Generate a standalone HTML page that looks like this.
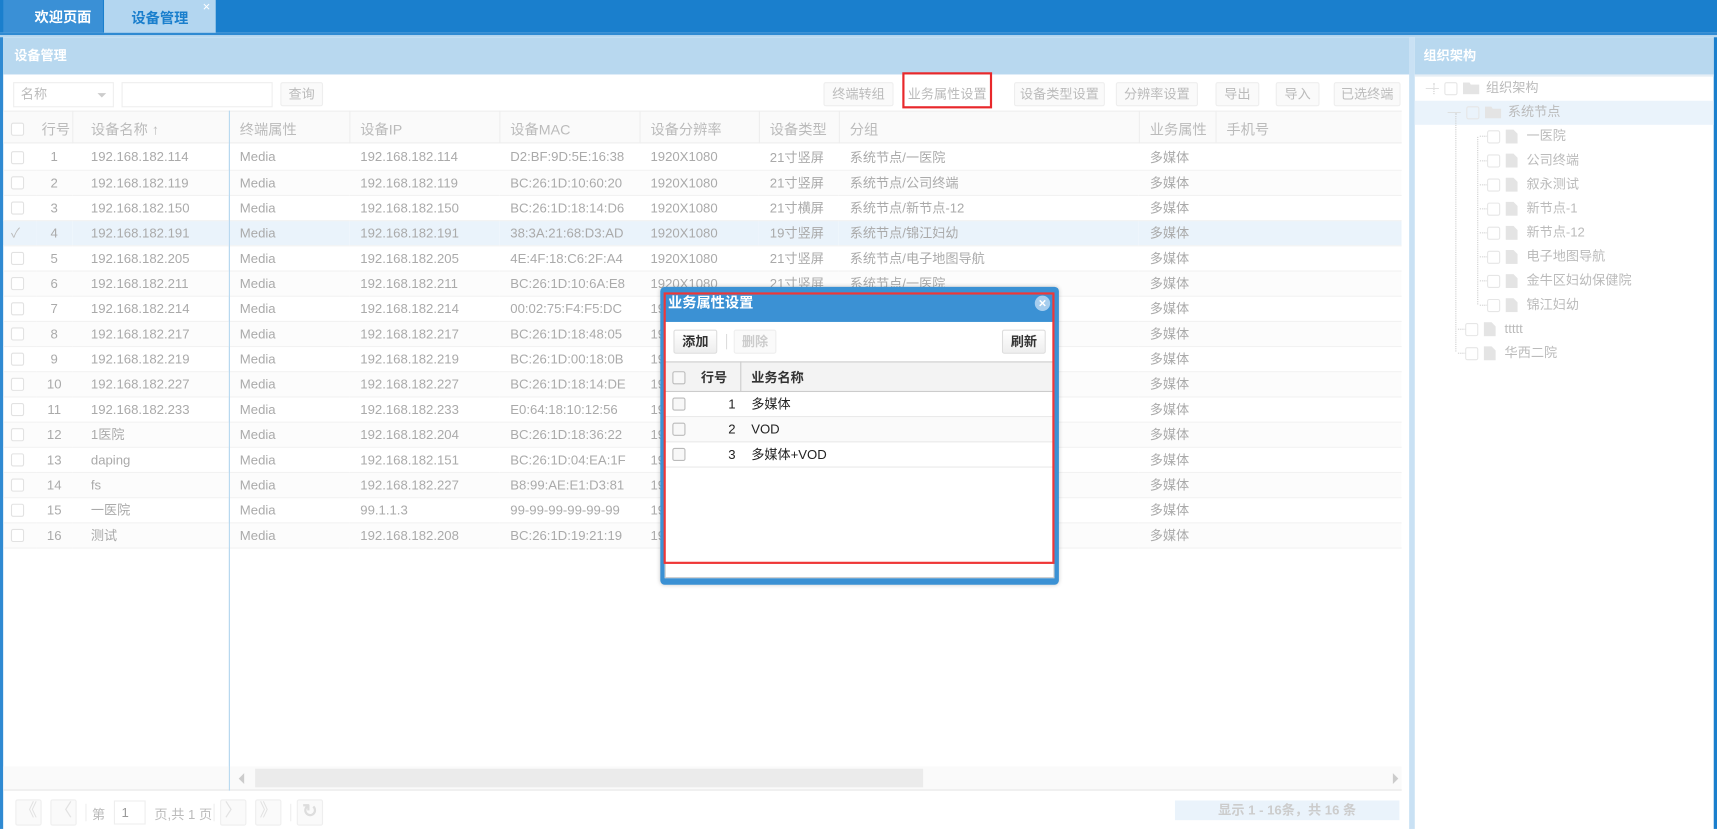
<!DOCTYPE html>
<html><head><meta charset="utf-8">
<style>
*{box-sizing:border-box;margin:0;padding:0}
html,body{width:1717px;height:829px;overflow:hidden;background:#fff}
#w{position:absolute;left:0;top:0;width:1568px;height:757px;transform:scale(1.09503);transform-origin:0 0;font-family:"Liberation Sans","Noto Sans CJK SC",sans-serif;font-size:12px;color:#aaa}
.a{position:absolute}
.h{color:#bbb}
.btn{position:absolute;height:22px;border:1px solid #eee;border-radius:2px;background:#fafafa;color:#bbb;text-align:center;line-height:20px;font-size:12px}
table{border-collapse:collapse;table-layout:fixed}
td{height:23px;white-space:nowrap;overflow:hidden;border-bottom:1px solid #f2f2f2;color:#aaa}
tr:nth-child(even) td{background:#fcfcfc}
tr.sel td{background:#eaf3fb}
.cb{display:inline-block;width:12px;height:12px;border:1px solid #e2e2e2;border-radius:2px;background:#fff;vertical-align:middle}
.tr{position:absolute;height:22px;line-height:22px;color:#bbb;font-size:12px}
.tcb{display:inline-block;width:12px;height:12px;border:1px solid #e6e6e6;border-radius:2px;vertical-align:middle;margin-right:5px}
.fi{display:inline-block;width:11px;height:13px;background:#e4e4e4;vertical-align:middle;margin-right:8px;clip-path:polygon(0 0,65% 0,100% 30%,100% 100%,0 100%)}
.fo{display:inline-block;width:15px;height:11px;background:#e4e4e4;vertical-align:middle;margin-right:6px;clip-path:polygon(0 0,40% 0,48% 18%,100% 18%,100% 100%,0 100%)}
.dcb{display:inline-block;width:12px;height:12px;border:1px solid #bbb;border-radius:2px;background:#f8f8f8;vertical-align:middle}
</style></head><body><div id="w">
<div class="a" style="left:0;top:0;width:1568px;height:30px;background:#1a7fcd"></div>
<div class="a" style="left:3px;top:0;width:91px;height:30px;background:#3a90d6;color:#fff;font-weight:bold;font-size:13px;text-align:center;line-height:32px;padding-left:18px">欢迎页面</div>
<div class="a" style="left:95px;top:0;width:102px;height:30px;background:#b3d6f0;color:#1a7fcd;font-weight:bold;font-size:13px;text-align:center;line-height:34px">设备管理</div>
<div class="a" style="left:185px;top:-1px;color:#fff;font-size:12px">×</div>
<div class="a" style="left:0;top:30px;width:1568px;height:4px;background:#b8d8ef;border-top:2px solid #2f8ad2"></div>
<div class="a" style="left:0;top:34px;width:3px;height:723px;background:#2f8ad2"></div>
<div class="a" style="left:1565px;top:34px;width:3px;height:723px;background:#1a7fcd"></div>
<div class="a" style="left:3px;top:34px;width:1285px;height:723px;background:#fff;border-right:1px solid #b8d8ef"></div>
<div class="a" style="left:3px;top:34px;width:1284px;height:34px;background:#b8d8ef;color:#fff;font-weight:bold;font-size:12px;line-height:34px;padding-left:10px">设备管理</div>
<div class="a" style="left:1287px;top:34px;width:5px;height:723px;background:#c9e1f4"></div>
<div class="a" style="left:12px;top:75px;width:92px;height:23px;border:1px solid #eee;color:#bbb;line-height:21px;padding-left:6px">名称<span class="a" style="right:6px;top:9px;border:4px solid transparent;border-top:4px solid #ccc"></span></div>
<div class="a" style="left:111px;top:75px;width:138px;height:23px;border:1px solid #eee"></div>
<div class="btn" style="left:256px;top:75px;width:39px">查询</div>
<div class="btn" style="left:752px;top:75px;width:64px">终端转组</div>
<div class="btn" style="left:826px;top:75px;width:78px;border-color:transparent;background:none">业务属性设置</div>
<div class="a" style="left:824px;top:66px;width:82px;height:33px;border:2px solid #e8282b"></div>
<div class="btn" style="left:926px;top:75px;width:83px">设备类型设置</div>
<div class="btn" style="left:1019px;top:75px;width:75px">分辨率设置</div>
<div class="btn" style="left:1110px;top:75px;width:40px">导出</div>
<div class="btn" style="left:1165px;top:75px;width:40px">导入</div>
<div class="btn" style="left:1218px;top:75px;width:61px">已选终端</div>
<div class="a" style="left:3px;top:101px;width:1277px;height:30px;background:#fafafa;border-top:1px solid #eee;border-bottom:1px solid #eee"></div>
<div class="a" style="left:10px;top:110px"><span class="cb"></span></div>
<div class="a h" style="left:38px;top:108px;font-size:13px">行号</div>
<div class="a" style="left:66px;top:101px;width:1px;height:30px;background:#eee"></div>
<div class="a h" style="left:83px;top:108px;font-size:13px">设备名称 ↑</div>
<div class="a" style="left:209px;top:101px;width:1px;height:620px;background:#b8d8ef"></div>
<div class="a h" style="left:219px;top:108px;font-size:13px">终端属性</div>
<div class="a" style="left:319px;top:101px;width:1px;height:30px;background:#eee"></div>
<div class="a h" style="left:329px;top:108px;font-size:13px">设备IP</div>
<div class="a" style="left:456px;top:101px;width:1px;height:30px;background:#eee"></div>
<div class="a h" style="left:466px;top:108px;font-size:13px">设备MAC</div>
<div class="a" style="left:584px;top:101px;width:1px;height:30px;background:#eee"></div>
<div class="a h" style="left:594px;top:108px;font-size:13px">设备分辨率</div>
<div class="a" style="left:693px;top:101px;width:1px;height:30px;background:#eee"></div>
<div class="a h" style="left:703px;top:108px;font-size:13px">设备类型</div>
<div class="a" style="left:766px;top:101px;width:1px;height:30px;background:#eee"></div>
<div class="a h" style="left:776px;top:108px;font-size:13px">分组</div>
<div class="a" style="left:1040px;top:101px;width:1px;height:30px;background:#eee"></div>
<div class="a h" style="left:1050px;top:108px;font-size:13px">业务属性</div>
<div class="a" style="left:1110px;top:101px;width:1px;height:30px;background:#eee"></div>
<div class="a h" style="left:1120px;top:108px;font-size:13px">手机号</div>
<table class="a" style="left:3px;top:132px;width:1277px">
<colgroup><col style="width:30px"><col style="width:33px"><col style="width:143px"><col style="width:110px"><col style="width:137px"><col style="width:128px"><col style="width:109px"><col style="width:73px"><col style="width:274px"><col style="width:70px"><col style="width:170px"></colgroup>
<tr><td style="padding-left:7px"><span class="cb"></span></td><td style="text-align:center">1</td><td style="padding-left:17px">192.168.182.114</td><td style="padding-left:10px">Media</td><td style="padding-left:10px">192.168.182.114</td><td style="padding-left:10px">D2:BF:9D:5E:16:38</td><td style="padding-left:10px">1920X1080</td><td style="padding-left:10px">21寸竖屏</td><td style="padding-left:10px">系统节点/一医院</td><td style="padding-left:10px">多媒体</td><td></td></tr>
<tr><td style="padding-left:7px"><span class="cb"></span></td><td style="text-align:center">2</td><td style="padding-left:17px">192.168.182.119</td><td style="padding-left:10px">Media</td><td style="padding-left:10px">192.168.182.119</td><td style="padding-left:10px">BC:26:1D:10:60:20</td><td style="padding-left:10px">1920X1080</td><td style="padding-left:10px">21寸竖屏</td><td style="padding-left:10px">系统节点/公司终端</td><td style="padding-left:10px">多媒体</td><td></td></tr>
<tr><td style="padding-left:7px"><span class="cb"></span></td><td style="text-align:center">3</td><td style="padding-left:17px">192.168.182.150</td><td style="padding-left:10px">Media</td><td style="padding-left:10px">192.168.182.150</td><td style="padding-left:10px">BC:26:1D:18:14:D6</td><td style="padding-left:10px">1920X1080</td><td style="padding-left:10px">21寸横屏</td><td style="padding-left:10px">系统节点/新节点-12</td><td style="padding-left:10px">多媒体</td><td></td></tr>
<tr class="sel"><td style="padding-left:7px;color:#bbb">✓</td><td style="text-align:center">4</td><td style="padding-left:17px">192.168.182.191</td><td style="padding-left:10px">Media</td><td style="padding-left:10px">192.168.182.191</td><td style="padding-left:10px">38:3A:21:68:D3:AD</td><td style="padding-left:10px">1920X1080</td><td style="padding-left:10px">19寸竖屏</td><td style="padding-left:10px">系统节点/锦江妇幼</td><td style="padding-left:10px">多媒体</td><td></td></tr>
<tr><td style="padding-left:7px"><span class="cb"></span></td><td style="text-align:center">5</td><td style="padding-left:17px">192.168.182.205</td><td style="padding-left:10px">Media</td><td style="padding-left:10px">192.168.182.205</td><td style="padding-left:10px">4E:4F:18:C6:2F:A4</td><td style="padding-left:10px">1920X1080</td><td style="padding-left:10px">21寸竖屏</td><td style="padding-left:10px">系统节点/电子地图导航</td><td style="padding-left:10px">多媒体</td><td></td></tr>
<tr><td style="padding-left:7px"><span class="cb"></span></td><td style="text-align:center">6</td><td style="padding-left:17px">192.168.182.211</td><td style="padding-left:10px">Media</td><td style="padding-left:10px">192.168.182.211</td><td style="padding-left:10px">BC:26:1D:10:6A:E8</td><td style="padding-left:10px">1920X1080</td><td style="padding-left:10px">21寸竖屏</td><td style="padding-left:10px">系统节点/一医院</td><td style="padding-left:10px">多媒体</td><td></td></tr>
<tr><td style="padding-left:7px"><span class="cb"></span></td><td style="text-align:center">7</td><td style="padding-left:17px">192.168.182.214</td><td style="padding-left:10px">Media</td><td style="padding-left:10px">192.168.182.214</td><td style="padding-left:10px">00:02:75:F4:F5:DC</td><td style="padding-left:10px">1920X1080</td><td style="padding-left:10px">21寸竖屏</td><td style="padding-left:10px">系统节点</td><td style="padding-left:10px">多媒体</td><td></td></tr>
<tr><td style="padding-left:7px"><span class="cb"></span></td><td style="text-align:center">8</td><td style="padding-left:17px">192.168.182.217</td><td style="padding-left:10px">Media</td><td style="padding-left:10px">192.168.182.217</td><td style="padding-left:10px">BC:26:1D:18:48:05</td><td style="padding-left:10px">1920X1080</td><td style="padding-left:10px">21寸竖屏</td><td style="padding-left:10px">系统节点</td><td style="padding-left:10px">多媒体</td><td></td></tr>
<tr><td style="padding-left:7px"><span class="cb"></span></td><td style="text-align:center">9</td><td style="padding-left:17px">192.168.182.219</td><td style="padding-left:10px">Media</td><td style="padding-left:10px">192.168.182.219</td><td style="padding-left:10px">BC:26:1D:00:18:0B</td><td style="padding-left:10px">1920X1080</td><td style="padding-left:10px">21寸竖屏</td><td style="padding-left:10px">系统节点</td><td style="padding-left:10px">多媒体</td><td></td></tr>
<tr><td style="padding-left:7px"><span class="cb"></span></td><td style="text-align:center">10</td><td style="padding-left:17px">192.168.182.227</td><td style="padding-left:10px">Media</td><td style="padding-left:10px">192.168.182.227</td><td style="padding-left:10px">BC:26:1D:18:14:DE</td><td style="padding-left:10px">1920X1080</td><td style="padding-left:10px">21寸竖屏</td><td style="padding-left:10px">系统节点</td><td style="padding-left:10px">多媒体</td><td></td></tr>
<tr><td style="padding-left:7px"><span class="cb"></span></td><td style="text-align:center">11</td><td style="padding-left:17px">192.168.182.233</td><td style="padding-left:10px">Media</td><td style="padding-left:10px">192.168.182.233</td><td style="padding-left:10px">E0:64:18:10:12:56</td><td style="padding-left:10px">1920X1080</td><td style="padding-left:10px">21寸竖屏</td><td style="padding-left:10px">系统节点</td><td style="padding-left:10px">多媒体</td><td></td></tr>
<tr><td style="padding-left:7px"><span class="cb"></span></td><td style="text-align:center">12</td><td style="padding-left:17px">1医院</td><td style="padding-left:10px">Media</td><td style="padding-left:10px">192.168.182.204</td><td style="padding-left:10px">BC:26:1D:18:36:22</td><td style="padding-left:10px">1920X1080</td><td style="padding-left:10px">21寸竖屏</td><td style="padding-left:10px">系统节点</td><td style="padding-left:10px">多媒体</td><td></td></tr>
<tr><td style="padding-left:7px"><span class="cb"></span></td><td style="text-align:center">13</td><td style="padding-left:17px">daping</td><td style="padding-left:10px">Media</td><td style="padding-left:10px">192.168.182.151</td><td style="padding-left:10px">BC:26:1D:04:EA:1F</td><td style="padding-left:10px">1920X1080</td><td style="padding-left:10px">21寸竖屏</td><td style="padding-left:10px">系统节点</td><td style="padding-left:10px">多媒体</td><td></td></tr>
<tr><td style="padding-left:7px"><span class="cb"></span></td><td style="text-align:center">14</td><td style="padding-left:17px">fs</td><td style="padding-left:10px">Media</td><td style="padding-left:10px">192.168.182.227</td><td style="padding-left:10px">B8:99:AE:E1:D3:81</td><td style="padding-left:10px">1920X1080</td><td style="padding-left:10px">21寸竖屏</td><td style="padding-left:10px">系统节点</td><td style="padding-left:10px">多媒体</td><td></td></tr>
<tr><td style="padding-left:7px"><span class="cb"></span></td><td style="text-align:center">15</td><td style="padding-left:17px">一医院</td><td style="padding-left:10px">Media</td><td style="padding-left:10px">99.1.1.3</td><td style="padding-left:10px">99-99-99-99-99-99</td><td style="padding-left:10px">1920X1080</td><td style="padding-left:10px">21寸竖屏</td><td style="padding-left:10px">系统节点</td><td style="padding-left:10px">多媒体</td><td></td></tr>
<tr><td style="padding-left:7px"><span class="cb"></span></td><td style="text-align:center">16</td><td style="padding-left:17px">测试</td><td style="padding-left:10px">Media</td><td style="padding-left:10px">192.168.182.208</td><td style="padding-left:10px">BC:26:1D:19:21:19</td><td style="padding-left:10px">1920X1080</td><td style="padding-left:10px">21寸竖屏</td><td style="padding-left:10px">系统节点</td><td style="padding-left:10px">多媒体</td><td></td></tr>
</table>
<div class="a" style="left:209px;top:132px;width:1px;height:589px;background:#b8d8ef"></div>
<div class="a" style="left:3px;top:700px;width:1277px;height:22px;background:#fafafa;border-bottom:1px solid #e6e6e6"></div>
<div class="a" style="left:209px;top:700px;width:1px;height:22px;background:#b8d8ef"></div>
<div class="a" style="left:218px;top:706px;border:5px solid transparent;border-right:5px solid #ccc;border-left:0"></div>
<div class="a" style="left:233px;top:702px;width:610px;height:17px;background:#ebebeb"></div>
<div class="a" style="left:1272px;top:706px;border:5px solid transparent;border-left:5px solid #ccc;border-right:0"></div>
<div class="btn" style="left:14px;top:730px;width:24px;height:24px;font-size:16px;color:#e2e2e2">《</div>
<div class="btn" style="left:46px;top:730px;width:24px;height:24px;font-size:16px;color:#e2e2e2">〈</div>
<div class="a" style="left:78px;top:734px;width:1px;height:16px;background:#eee"></div>
<div class="a" style="left:84px;top:735px;color:#bbb">第</div>
<div class="a" style="left:104px;top:731px;width:29px;height:22px;border:1px solid #eee;color:#999;line-height:20px;padding-left:6px">1</div>
<div class="a" style="left:141px;top:735px;color:#bbb">页,共 1 页</div>
<div class="a" style="left:195px;top:734px;width:1px;height:16px;background:#eee"></div>
<div class="btn" style="left:201px;top:730px;width:24px;height:24px;font-size:16px;color:#e2e2e2">〉</div>
<div class="btn" style="left:233px;top:730px;width:24px;height:24px;font-size:16px;color:#e2e2e2">》</div>
<div class="a" style="left:265px;top:734px;width:1px;height:16px;background:#eee"></div>
<div class="btn" style="left:271px;top:730px;width:24px;height:24px;font-size:17px;color:#ddd;font-weight:bold">↻</div>
<div class="a" style="left:1073px;top:731px;width:205px;height:18px;background:#eaf3fb;color:#ccc;text-align:center;line-height:18px;font-weight:bold">显示 1 - 16条，共 16 条</div>
<div class="a" style="left:1292px;top:34px;width:273px;height:34px;background:#b8d8ef;color:#fff;font-weight:bold;line-height:34px;padding-left:8px">组织架构</div>
<div class="a" style="left:1292px;top:68px;width:273px;height:2px;background:#e6eef5"></div>
<div class="a" style="left:1292px;top:92px;width:273px;height:22px;background:#eaf3fb"></div>
<div class="a" style="left:1309px;top:76px;width:0;height:10px;border-left:1px dotted #ccc"></div>
<div class="a" style="left:1329px;top:103px;width:0;height:218px;border-left:1px dotted #ccc"></div>
<div class="a" style="left:1349px;top:125px;width:0;height:153px;border-left:1px dotted #ccc"></div>
<div class="tr" style="left:1302px;top:69px"><span style="color:#ddd;margin-right:5px">—</span><span class="tcb"></span><span class="fo"></span>组织架构</div>
<div class="tr" style="left:1322px;top:91px"><span style="color:#ddd;margin-right:5px">—</span><span class="tcb"></span><span class="fo"></span>系统节点</div>
<div class="tr" style="left:1350px;top:113px"><span style="color:#ddd;letter-spacing:-2px">····</span><span class="tcb"></span><span class="fi"></span>一医院</div>
<div class="tr" style="left:1350px;top:135px"><span style="color:#ddd;letter-spacing:-2px">····</span><span class="tcb"></span><span class="fi"></span>公司终端</div>
<div class="tr" style="left:1350px;top:157px"><span style="color:#ddd;letter-spacing:-2px">····</span><span class="tcb"></span><span class="fi"></span>叙永测试</div>
<div class="tr" style="left:1350px;top:179px"><span style="color:#ddd;letter-spacing:-2px">····</span><span class="tcb"></span><span class="fi"></span>新节点-1</div>
<div class="tr" style="left:1350px;top:201px"><span style="color:#ddd;letter-spacing:-2px">····</span><span class="tcb"></span><span class="fi"></span>新节点-12</div>
<div class="tr" style="left:1350px;top:223px"><span style="color:#ddd;letter-spacing:-2px">····</span><span class="tcb"></span><span class="fi"></span>电子地图导航</div>
<div class="tr" style="left:1350px;top:245px"><span style="color:#ddd;letter-spacing:-2px">····</span><span class="tcb"></span><span class="fi"></span>金牛区妇幼保健院</div>
<div class="tr" style="left:1350px;top:267px"><span style="color:#ddd;letter-spacing:-2px">····</span><span class="tcb"></span><span class="fi"></span>锦江妇幼</div>
<div class="tr" style="left:1330px;top:289px"><span style="color:#ddd;letter-spacing:-2px">····</span><span class="tcb"></span><span class="fi"></span>ttttt</div>
<div class="tr" style="left:1330px;top:311px"><span style="color:#ddd;letter-spacing:-2px">····</span><span class="tcb"></span><span class="fi"></span>华西二院</div>
<div class="a" style="left:603px;top:262px;width:364px;height:272px;background:#3b91d4;border-radius:4px;box-shadow:0 0 4px rgba(0,0,0,.2)"></div>
<div class="a" style="left:610px;top:268px;color:#fff;font-weight:bold;font-size:13px;line-height:18px">业务属性设置</div>
<div class="a" style="left:945px;top:270px;width:14px;height:14px;border-radius:50%;background:#a6cdee;color:#fff;font-size:12px;line-height:14px;text-align:center;font-weight:bold">×</div>
<div class="a" style="left:607px;top:294px;width:356px;height:220px;background:#fff"></div>
<div class="a" style="left:607px;top:514px;width:356px;height:14px;background:#fff;border:1px solid #ccc;border-top:none"></div>
<div class="a" style="left:615px;top:301px;width:40px;height:22px;border:1px solid #ddd;border-radius:2px;background:linear-gradient(#fff,#eee);color:#333;font-weight:bold;text-align:center;line-height:20px">添加</div>
<div class="a" style="left:663px;top:305px;width:1px;height:14px;background:#ddd"></div>
<div class="a" style="left:670px;top:301px;width:39px;height:22px;border:1px solid #eee;border-radius:2px;background:#fafafa;color:#ccc;font-weight:bold;text-align:center;line-height:20px">删除</div>
<div class="a" style="left:915px;top:301px;width:40px;height:22px;border:1px solid #ddd;border-radius:2px;background:linear-gradient(#fff,#eee);color:#333;font-weight:bold;text-align:center;line-height:20px">刷新</div>
<div class="a" style="left:607px;top:330px;width:356px;height:28px;background:#f3f3f3;border-top:1px solid #ccc;border-bottom:1px solid #ccc"></div>
<div class="a" style="left:676px;top:330px;width:1px;height:28px;background:#ccc"></div>
<div class="a" style="left:614px;top:337px"><span class="dcb"></span></div>
<div class="a" style="left:640px;top:336px;color:#333;font-weight:bold;font-size:12px">行号</div>
<div class="a" style="left:686px;top:336px;color:#333;font-weight:bold;font-size:12px">业务名称</div>
<div class="a" style="left:607px;top:358px;width:356px;height:23px;border-bottom:1px solid #e8e8e8;color:#222;line-height:23px"><span class="dcb" style="position:absolute;left:7px;top:5px"></span><span class="a" style="left:58px">1</span><span class="a" style="left:79px">多媒体</span></div>
<div class="a" style="left:607px;top:381px;width:356px;height:23px;border-bottom:1px solid #e8e8e8;background:#fafafa;color:#222;line-height:23px"><span class="dcb" style="position:absolute;left:7px;top:5px"></span><span class="a" style="left:58px">2</span><span class="a" style="left:79px">VOD</span></div>
<div class="a" style="left:607px;top:404px;width:356px;height:23px;border-bottom:1px solid #e8e8e8;color:#222;line-height:23px"><span class="dcb" style="position:absolute;left:7px;top:5px"></span><span class="a" style="left:58px">3</span><span class="a" style="left:79px">多媒体+VOD</span></div>
<div class="a" style="left:606px;top:267px;width:357px;height:248px;border:2px solid #ef3737"></div>
</div></body></html>
